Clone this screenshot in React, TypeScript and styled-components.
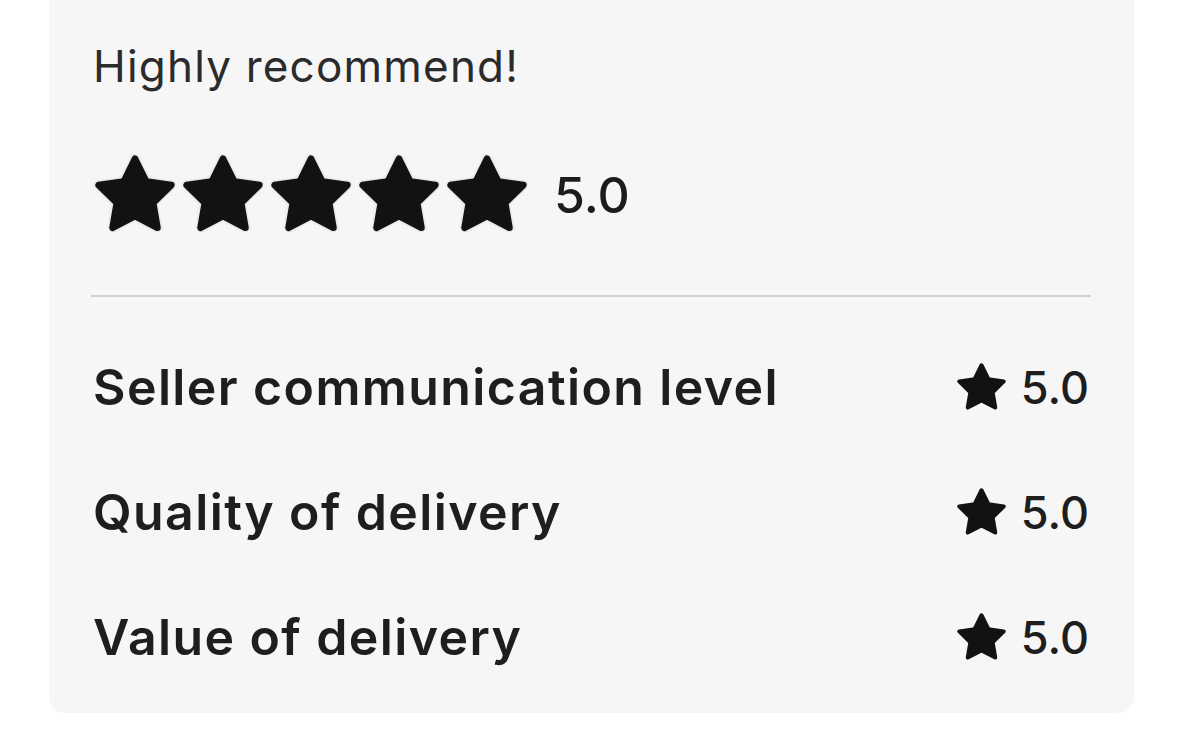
import React from "react";
import styled, { createGlobalStyle } from "styled-components";

const GlobalStyle = createGlobalStyle`
  html, body { margin: 0; padding: 0; background: #ffffff; }
  body { font-family: Inter, "Noto Sans", "Liberation Sans", sans-serif; }
`;

const Card = styled.section`
  box-sizing: border-box;
  margin-left: 49px;
  width: 1085px;
  background: #f6f6f6;
  border-radius: 0 0 16px 16px;
  padding: 44px 45px 52px 44px;
  display: flex;
  flex-direction: column;
`;

const Comment = styled.p`
  margin: 0;
  font-size: 44px;
  line-height: 44px;
  font-weight: 400;
  letter-spacing: 1.2px;
  color: #2b2b2b;
`;

const OverallRow = styled.div`
  display: flex;
  align-items: center;
  margin-top: 67px;
  margin-left: 2px;
`;

const StarGroup = styled.div`
  display: flex;
  gap: 8px;
`;

const OverallValue = styled.span`
  margin-left: 27px;
  font-size: 50px;
  line-height: 50px;
  font-weight: 500;
  color: #1c1c1c;
`;

const Divider = styled.hr`
  margin: 60px -2px 0 -2px;
  border: none;
  height: 2px;
  background: #d0d0d3;
`;

const Breakdown = styled.ul`
  list-style: none;
  margin: 66px 0 0;
  padding: 0;
  display: flex;
  flex-direction: column;
  gap: 77px;
`;

const Row = styled.li`
  display: flex;
  align-items: center;
  justify-content: space-between;
  height: 48px;
`;

const Label = styled.span`
  font-size: 50px;
  line-height: 48px;
  font-weight: 600;
  letter-spacing: 1.4px;
  color: #1e1e1e;
`;

const Score = styled.span`
  display: flex;
  align-items: center;
  gap: 15px;
`;

const ScoreValue = styled.span`
  font-size: 45px;
  line-height: 45px;
  font-weight: 500;
  color: #1e1e1e;
`;

const StarSvg = styled.svg<{ $halo?: boolean }>`
  display: block;
  overflow: visible;
  ${(p) => (p.$halo ? "filter: drop-shadow(0 0 1.5px rgba(0,0,0,0.18));" : "")}
`;

const STAR =
  "12,2 15.09,8.26 22,9.27 17,14.14 18.18,21.02 12,17.77 5.82,21.02 7,14.14 2,9.27 8.91,8.26";

function Star({ size, halo }: { size: number; halo?: boolean }) {
  return (
    <StarSvg $halo={halo} width={size} height={size} viewBox="1 1 22 22" aria-hidden="true">
      <polygon
        points={STAR}
        fill="#121212"
        stroke="#121212"
        strokeWidth={1.8}
        strokeLinejoin="round"
      />
    </StarSvg>
  );
}

const rows = [
  { label: "Seller communication level", value: "5.0" },
  { label: "Quality of delivery", value: "5.0" },
  { label: "Value of delivery", value: "5.0" },
];

export default function App() {
  return (
    <>
      <GlobalStyle />
      <Card>
        <Comment>Highly recommend!</Comment>
        <OverallRow>
          <StarGroup>
            {[0, 1, 2, 3, 4].map((i) => (
              <Star key={i} size={80} halo />
            ))}
          </StarGroup>
          <OverallValue>5.0</OverallValue>
        </OverallRow>
        <Divider />
        <Breakdown>
          {rows.map((r) => (
            <Row key={r.label}>
              <Label>{r.label}</Label>
              <Score>
                <Star size={49} />
                <ScoreValue>{r.value}</ScoreValue>
              </Score>
            </Row>
          ))}
        </Breakdown>
      </Card>
    </>
  );
}
